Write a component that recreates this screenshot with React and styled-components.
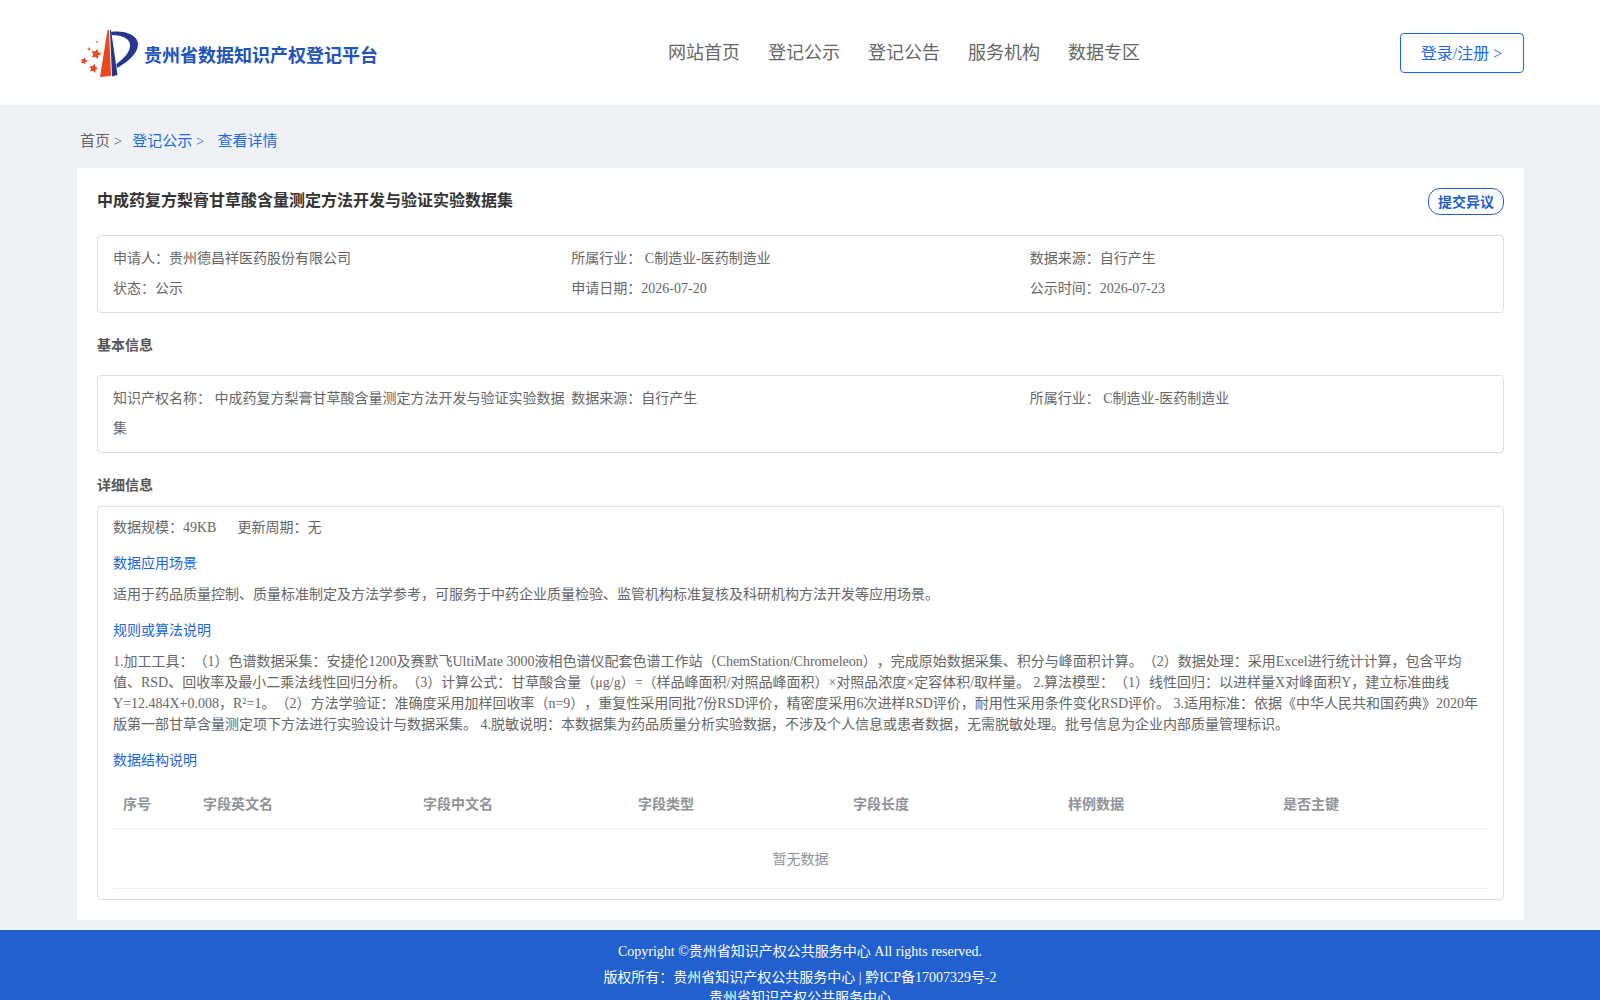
import React from 'react';
import styled, { createGlobalStyle } from 'styled-components';

const GlobalStyle = createGlobalStyle`
  html, body {
    margin: 0;
    padding: 0;
    background: #eff2f5;
    font-family: 'Liberation Serif', 'Noto Sans CJK SC', serif;
    text-spacing-trim: space-all;
    overflow-x: hidden;
  }
  * {
    box-sizing: border-box;
  }
`;

const Header = styled.header`
  display: flex;
  align-items: center;
  height: 105px;
  padding: 0 76px 0 80px;
  background: #fff;
`;

const Brand = styled.div`
  display: flex;
  align-items: center;
  gap: 6px;
  width: 588px;
  padding-top: 2px;
`;

const BrandName = styled.span`
  font-size: 18px;
  font-weight: 700;
  color: #2254b8;
`;

const Nav = styled.nav`
  display: flex;
  gap: 28px;
  flex: 1;
  padding-bottom: 4px;
`;

const NavItem = styled.a`
  font-size: 18px;
  color: #666;
`;

const LoginButton = styled.a`
  display: flex;
  align-items: center;
  justify-content: center;
  width: 124px;
  height: 40px;
  padding: 0 1px 2px 0;
  border: 1px solid #1a6ae6;
  border-radius: 4px;
  font-size: 16px;
  color: #1a6ae6;
`;

const Crumbs = styled.div`
  display: flex;
  align-items: center;
  height: 63px;
  padding: 6px 0 0 80px;
  font-size: 15px;
`;

const Crumb = styled.span`
  margin-right: ${(p) => p.$gap}px;
  color: ${(p) => (p.$active ? '#1a6ae6' : '#666')};
`;

const Card = styled.main`
  width: 1447px;
  margin-left: 77px;
  padding: 20px;
  background: #fff;
`;

const TitleRow = styled.div`
  display: flex;
  justify-content: space-between;
  align-items: flex-start;
  height: 47px;
`;

const Title = styled.h1`
  margin: 0;
  font-size: 16px;
  line-height: 26px;
  font-weight: 700;
  color: #333;
`;

const ObjectionButton = styled.a`
  display: flex;
  align-items: center;
  justify-content: center;
  width: 76px;
  height: 27px;
  padding-bottom: 2px;
  border: 1px solid #1f5fc9;
  border-radius: 12px;
  font-size: 14px;
  font-weight: 700;
  color: #1f5fc9;
`;

const InfoBox = styled.div`
  display: grid;
  grid-template-columns: repeat(3, 1fr);
  padding: 8px 15px;
  border: 1px solid #dcdfe6;
  border-radius: 4px;
  font-size: 14px;
  color: #666;
`;

const InfoCell = styled.div`
  line-height: 30px;
`;

const SectionTitle = styled.h2`
  margin: 22px 0 ${(p) => p.$after}px;
  font-size: 14px;
  line-height: 21px;
  font-weight: 700;
  color: #555;
`;

const DetailBox = styled.div`
  padding: 10px 15px;
  border: 1px solid #dcdfe6;
  border-radius: 4px;
  font-size: 14px;
  color: #666;
`;

const Stats = styled.div`
  display: flex;
  gap: 21px;
  line-height: 21px;
`;

const SubTitle = styled.h3`
  margin: 15px 0 10px;
  font-size: 14px;
  line-height: 21px;
  font-weight: 400;
  color: #1a66e0;
`;

const Text = styled.p`
  margin: 0;
  font-size: 14px;
  line-height: 21px;
`;

const Table = styled.table`
  width: 100%;
  margin-top: -2px;
  border-collapse: collapse;
  table-layout: fixed;
  font-size: 14px;
`;

const HeadCell = styled.th`
  width: ${(p) => p.$width}px;
  height: 49px;
  padding: 0 10px;
  border-bottom: 1px solid #ebeef5;
  text-align: left;
  font-weight: 700;
  color: #909399;
`;

const EmptyCell = styled.td`
  height: 60px;
  border-bottom: 1px solid #ebeef5;
  text-align: center;
  color: #909399;
`;

const Footer = styled.footer`
  margin-top: 10px;
  padding: 12px 0;
  background: #2160cf;
  font-size: 14px;
  line-height: 20px;
  color: #fff;
  text-align: center;
`;

const FooterLine = styled.div`
  margin-bottom: ${(p) => p.$gap || 0}px;
`;

const starPoints = (cx, cy, r) => {
  const pts = [];
  for (let i = 0; i < 10; i++) {
    const radius = i % 2 === 0 ? r : r * 0.5;
    const angle = -Math.PI / 2 + 0.25 + (i * Math.PI) / 5;
    pts.push(`${(cx + radius * Math.cos(angle)).toFixed(1)},${(cy + radius * Math.sin(angle)).toFixed(1)}`);
  }
  return pts.join(' ');
};

const Logo = () => (
  <svg width="58" height="50" viewBox="0 0 58 50">
    <path d="M20 48 L27.5 1 L29 1 L31 47 Z" fill="#e8491d" />
    <path d="M30 1 L31 1 L37.5 46 L32 47.5 Z" fill="#27358f" />
    <path d="M31 3 C44 1 58 6 58 15 C58 25 47 33 37 39 L36.4 35 C43 30 51 23 50 15 C49 9 41 6 31.5 6 Z" fill="#27358f" />
    <polygon points={starPoints(16, 25, 5.5)} fill="#e8491d" />
    <polygon points={starPoints(4, 32, 3.8)} fill="#e8491d" />
    <polygon points={starPoints(13.5, 39.5, 4.8)} fill="#e8491d" />
    <circle cx="9" cy="20" r="1.5" fill="#ee7a4f" />
    <circle cx="17" cy="13" r="1" fill="#ee7a4f" />
  </svg>
);

const tableColumns = [
  { label: '序号', width: 80 },
  { label: '字段英文名', width: 220 },
  { label: '字段中文名', width: 215 },
  { label: '字段类型', width: 215 },
  { label: '字段长度', width: 215 },
  { label: '样例数据', width: 215 },
  { label: '是否主键', width: 215 },
];

const App = () => {
  return (
    <>
      <GlobalStyle />
      <Header>
        <Brand>
          <Logo />
          <BrandName>贵州省数据知识产权登记平台</BrandName>
        </Brand>
        <Nav>
          <NavItem>网站首页</NavItem>
          <NavItem>登记公示</NavItem>
          <NavItem>登记公告</NavItem>
          <NavItem>服务机构</NavItem>
          <NavItem>数据专区</NavItem>
        </Nav>
        <LoginButton>登录/注册 &gt;</LoginButton>
      </Header>
      <Crumbs>
        <Crumb $gap={10}>首页 &gt;</Crumb>
        <Crumb $active $gap={13}>登记公示 &gt;</Crumb>
        <Crumb $active>查看详情</Crumb>
      </Crumbs>
      <Card>
        <TitleRow>
          <Title>中成药复方梨膏甘草酸含量测定方法开发与验证实验数据集</Title>
          <ObjectionButton>提交异议</ObjectionButton>
        </TitleRow>
        <InfoBox>
          <InfoCell>申请人：贵州德昌祥医药股份有限公司</InfoCell>
          <InfoCell>所属行业： C制造业-医药制造业</InfoCell>
          <InfoCell>数据来源：自行产生</InfoCell>
          <InfoCell>状态：公示</InfoCell>
          <InfoCell>申请日期：2026-07-20</InfoCell>
          <InfoCell>公示时间：2026-07-23</InfoCell>
        </InfoBox>
        <SectionTitle $after={19}>基本信息</SectionTitle>
        <InfoBox>
          <InfoCell>知识产权名称： 中成药复方梨膏甘草酸含量测定方法开发与验证实验数据集</InfoCell>
          <InfoCell>数据来源：自行产生</InfoCell>
          <InfoCell>所属行业： C制造业-医药制造业</InfoCell>
        </InfoBox>
        <SectionTitle $after={10}>详细信息</SectionTitle>
        <DetailBox>
          <Stats>
            <span>数据规模：49KB</span>
            <span>更新周期：无</span>
          </Stats>
          <SubTitle>数据应用场景</SubTitle>
          <Text>适用于药品质量控制、质量标准制定及方法学参考，可服务于中药企业质量检验、监管机构标准复核及科研机构方法开发等应用场景。</Text>
          <SubTitle>规则或算法说明</SubTitle>
          <Text>1.加工工具：（1）色谱数据采集：安捷伦1200及赛默飞UltiMate 3000液相色谱仪配套色谱工作站（ChemStation/Chromeleon），完成原始数据采集、积分与峰面积计算。（2）数据处理：采用Excel进行统计计算，包含平均值、RSD、回收率及最小二乘法线性回归分析。（3）计算公式：甘草酸含量（μg/g）=（样品峰面积/对照品峰面积）×对照品浓度×定容体积/取样量。 2.算法模型：（1）线性回归：以进样量X对峰面积Y，建立标准曲线Y=12.484X+0.008，R²=1。（2）方法学验证：准确度采用加样回收率（n=9），重复性采用同批7份RSD评价，精密度采用6次进样RSD评价，耐用性采用条件变化RSD评价。 3.适用标准：依据《中华人民共和国药典》2020年版第一部甘草含量测定项下方法进行实验设计与数据采集。 4.脱敏说明：本数据集为药品质量分析实验数据，不涉及个人信息或患者数据，无需脱敏处理。批号信息为企业内部质量管理标识。</Text>
          <SubTitle>数据结构说明</SubTitle>
          <Table>
            <thead>
              <tr>
                {tableColumns.map((col) => (
                  <HeadCell key={col.label} $width={col.width}>{col.label}</HeadCell>
                ))}
              </tr>
            </thead>
            <tbody>
              <tr>
                <EmptyCell colSpan={tableColumns.length}>暂无数据</EmptyCell>
              </tr>
            </tbody>
          </Table>
        </DetailBox>
      </Card>
      <Footer>
        <FooterLine $gap={6}>Copyright ©贵州省知识产权公共服务中心 All rights reserved.</FooterLine>
        <FooterLine>版权所有：贵州省知识产权公共服务中心 | 黔ICP备17007329号-2</FooterLine>
        <FooterLine>贵州省知识产权公共服务中心</FooterLine>
      </Footer>
    </>
  );
};

export default App;
